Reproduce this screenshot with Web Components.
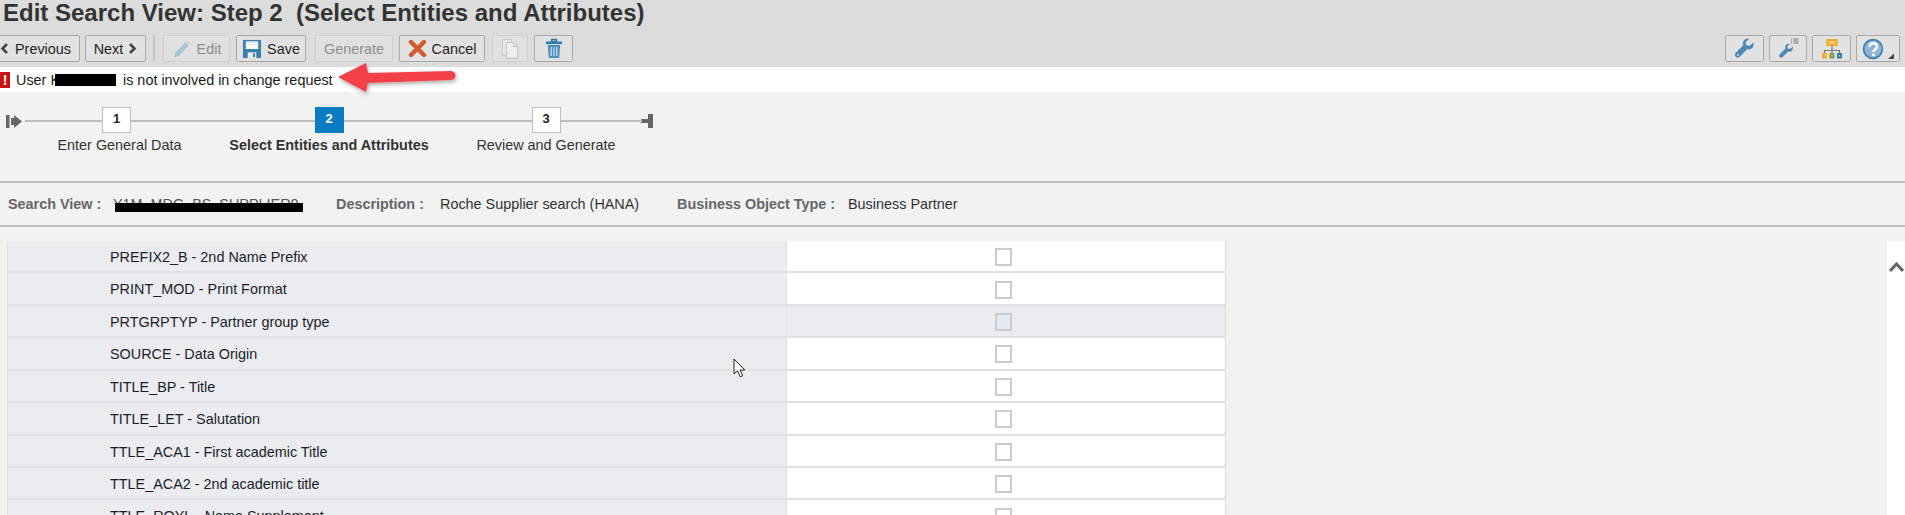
<!DOCTYPE html>
<html><head><meta charset="utf-8"><title>Edit Search View</title>
<style>
html,body{margin:0;height:515px;overflow:hidden;background:#f2f2f2;font-family:"Liberation Sans",Arial,sans-serif;color:#222}
</style></head><body>
<sv-page>
<sv-header>
  <span slot="title">Edit Search View: Step 2  (Select Entities and Attributes)</span>
  <sv-btn w="82" icon="left-first" pr="7" style="--gap:6px">Previous</sv-btn>
  <sv-btn w="61" icon="right" trail ml="-1">Next</sv-btn>
  <sv-sep></sv-sep>
  <sv-btn w="67" icon="edit" off>Edit</sv-btn>
  <sv-btn w="70" icon="save">Save</sv-btn>
  <sv-btn w="78" off ml="3">Generate</sv-btn>
  <sv-btn w="86" icon="cancel">Cancel</sv-btn>
  <sv-btn w="36" icon="copy" off ml="1"></sv-btn>
  <sv-btn w="39" icon="trash"></sv-btn>
  <sv-btn slot="right" w="39" icon="wrench"></sv-btn>
  <sv-btn slot="right" w="38" icon="wrenchlist"></sv-btn>
  <sv-btn slot="right" w="39" icon="org"></sv-btn>
  <sv-btn slot="right" w="44" icon="help"></sv-btn>
</sv-header>
<sv-message>User K<sv-redact w="61"></sv-redact> is not involved in change request</sv-message>
<sv-stepper>
  <sv-step n="1" w="183" style="--tx:6px">Enter General Data</sv-step>
  <sv-step n="2" w="242" active>Select Entities and Attributes</sv-step>
  <sv-step n="3" w="192">Review and Generate</sv-step>
</sv-stepper>
<sv-info></sv-info>
<sv-table>
  <sv-row>PREFIX2_B - 2nd Name Prefix</sv-row>
  <sv-row>PRINT_MOD - Print Format</sv-row>
  <sv-row shaded>PRTGRPTYP - Partner group type</sv-row>
  <sv-row>SOURCE - Data Origin</sv-row>
  <sv-row>TITLE_BP - Title</sv-row>
  <sv-row>TITLE_LET - Salutation</sv-row>
  <sv-row>TTLE_ACA1 - First academic Title</sv-row>
  <sv-row>TTLE_ACA2 - 2nd academic title</sv-row>
  <sv-row>TTLE_ROYL - Name Supplement</sv-row>
</sv-table>
</sv-page>
<script>
const ICONS={
 'left-first':'<svg width="9" height="11" viewBox="0 0 9 11"><path d="M7 1 2.5 5.5 7 10" fill="none" stroke="#444" stroke-width="2.6"/></svg>',
 right:'<svg width="9" height="11" viewBox="0 0 9 11"><path d="M2 1 6.5 5.5 2 10" fill="none" stroke="#444" stroke-width="2.6"/></svg>',
 edit:'<svg width="20" height="20" viewBox="0 0 20 20"><path d="M3 14 13.500 3.200l3.400 3.200L6.300 17.200 2 18.500z" fill="#a9c3d6"/><path d="M14.500 2.400l1-.9 3.300 3.200-1 1z" fill="#bcd0de"/></svg>',
 save:'<svg width="20" height="20" viewBox="0 0 21 21"><path d="M1 1h19v19H1z" fill="#3d7fae"/><path d="M4 2.500h13v8H4z" fill="#fff"/><path d="M4 4h13M4 6h13" stroke="#cfe0ec" stroke-width=".8"/><path d="M6 14h9v6H6z" fill="#e9eef2"/><path d="M11.500 15h2.200v4h-2.200z" fill="#3d7fae"/></svg>',
 cancel:'<svg width="19" height="19" viewBox="0 0 19 19"><path d="M3 3l13 13M16 3 3 16" stroke="#cf5a2c" stroke-width="4.400" stroke-linecap="round"/></svg>',
 copy:'<svg width="20" height="21" viewBox="0 0 20 21"><path d="M2.500 1.500h9v16h-9z" fill="#e6e6e6" stroke="#c9c9c9"/><path d="M6.500 4.500h7l4 4v12h-11z" fill="#eee" stroke="#c4c4c4"/><path d="M13.500 4.500v4h4" fill="none" stroke="#c4c4c4"/></svg>',
 trash:'<svg width="18" height="21" viewBox="0 0 18 21"><path d="M6.500 1.500h5v2h-5z" fill="none" stroke="#3579aa" stroke-width="1.400"/><path d="M1 3.500h16v2.600H1z" fill="#3579aa"/><path d="M2.800 7h12.400l-1 13H3.800z" fill="#4d8dba"/><path d="M6.200 9v9M9 9v9M11.800 9v9" stroke="#d5e5f0" stroke-width="1.200"/></svg>',
 wrench:'<svg width="21" height="21" viewBox="0 0 26 26"><path d="M24 5.500l-5 4.500-3.700-1-1-3.600L19 1c-3.500-1.100-7.500 1-8 5-.1 1.200 0 2 .4 3L2 18.500c-1.600 1.700-.6 4.300.8 5.200 1.500.9 3.200.6 4.400-.6l9-9.300c1.200.4 2.300.5 3.500.2 3.400-.8 5.300-4.600 4.300-8z" fill="#4c88b8"/><circle cx="4.800" cy="21" r="1.200" fill="#cfe0ec"/></svg>',
 wrenchlist:'<svg width="21" height="21" viewBox="0 0 21 21"><path d="M15 8.500l-3 2.600-2.200-.6-.6-2.100 2.800-2.500c-2.100-.6-4.400.6-4.800 2.900-.1.700 0 1.300.3 1.800L1.700 16.300c-1 1-.4 2.500.5 3.100.9.500 1.900.3 2.600-.3l5.300-5.500c.7.200 1.300.2 2.100.1 2-.5 3.300-2.700 2.800-5.700z" fill="#4c88b8"/><path d="M13 1h1.200M13 3h1.200M13 5h1.200M15.500 1H20.500M15.500 3H20.500M15.500 5H20.500" stroke="#777" stroke-width="1"/></svg>',
 org:'<svg width="20" height="20" viewBox="0 0 20 20"><path d="M10 7v4.500M2.500 14v-2.500h15V14M10 11.500V14" fill="none" stroke="#777" stroke-width="1.200"/><path d="M4.500 0h11v7h-11z" fill="#f5a623"/><path d="M6.500 2h7v3h-7z" fill="#f9c766"/><path d="M0 14h5v5.500H0z" fill="#f5a623"/><path d="M7.500 14h5v5.500h-5z" fill="#7a9a3d"/><path d="M15 14h5v5.500h-5z" fill="#2f79ab"/><circle cx="2.500" cy="16.700" r=".9" fill="#fbd78d"/><circle cx="10" cy="16.700" r=".9" fill="#b5cc80"/><circle cx="17.500" cy="16.700" r=".9" fill="#9cc4dd"/></svg>',
 help:'<svg width="34" height="22" viewBox="0 0 34 22"><circle cx="12" cy="11" r="9.400" fill="#8fb4d4" stroke="#3f80b0" stroke-width="1.800"/><path d="M8.500 8.800c0-4.600 7.500-4.600 7.500 0 0 2.700-3.600 2.700-3.600 5.300" fill="none" stroke="#fff" stroke-width="2.500"/><circle cx="12.400" cy="16.700" r="1.500" fill="#fff"/><path d="M33 15.500V21h-6z" fill="#444"/></svg>'
};
function mk(tag,css,html,setup){
  customElements.define(tag,class extends HTMLElement{
    connectedCallback(){
      if(this.shadowRoot)return;
      const r=this.attachShadow({mode:'open'});
      r.innerHTML='<style>'+css+'</style>'+(typeof html==='function'?html(this):html);
      if(setup)setup(this,r);
    }
  });
}
mk('sv-page',':host{display:block;height:515px;overflow:hidden;position:relative}','<slot></slot>');
mk('sv-header',`:host{display:block;height:67px;background:#dcdcdc;box-sizing:border-box}
 h1{margin:0;height:35px;padding-left:3px;font:bold 24px/25px "Liberation Sans",Arial,sans-serif;color:#333;white-space:pre}
 .bar{display:flex;justify-content:space-between;align-items:flex-start;margin-left:-2px;padding-right:5px}
 .l,.r{display:flex;align-items:flex-start}
 .l{gap:6px}.r{gap:5px}`,
 `<h1><slot name="title"></slot></h1><div class="bar"><div class="l"><slot></slot></div><div class="r"><slot name="right"></slot></div></div>`);
mk('sv-sep',':host{display:block;width:2px;height:26px;background:#c2c2c2;margin:0 2px 0 1px}','');
mk('sv-btn',`:host{display:block;box-sizing:border-box;height:27px;border:1px solid #a8a8a8;border-radius:2px;background:#e2e2e2;color:#222;font-size:14.400px}
 :host([off]){border-color:#cfcfcf;color:#8d8d8d;background:#e0e0e0}
 .i{display:flex;box-sizing:border-box;height:100%;align-items:center;justify-content:center;gap:var(--gap,5px);white-space:nowrap}
 svg{display:block;flex:none}`,
 el=>`<div class="i" style="padding-right:${el.getAttribute('pr')||0}px">${el.hasAttribute('trail')?'':(ICONS[el.getAttribute('icon')]||'')}<slot></slot>${el.hasAttribute('trail')?ICONS[el.getAttribute('icon')]:''}</div>`,
 el=>{el.style.width=el.getAttribute('w')+'px';if(el.hasAttribute('ml'))el.style.marginLeft=el.getAttribute('ml')+'px'});
mk('sv-message',`:host{display:flex;align-items:center;height:25px;background:#fff;font-size:14.400px;color:#1a1a1a;white-space:pre;position:relative}
 .e{width:10px;height:16px;background:#cc1111;color:#fff;font:bold 14px/16px "Liberation Sans",Arial,sans-serif;text-align:center;margin-right:6px;flex:none}
 svg{position:absolute;left:335px;top:-8px}`,
 `<div class="e">!</div><span><slot></slot></span>
 <svg width="170" height="42" viewBox="0 0 170 42"><defs><filter id="s" x="-10%" y="-30%" width="120%" height="170%"><feDropShadow dx="1" dy="2" stdDeviation="2" flood-color="#000" flood-opacity=".35"/></filter></defs><path d="M3 18 31 4 33 14 116 12c6 0 6 9 0 9L33 24 31 33z" fill="#f44147" filter="url(#s)"/></svg>`);
mk('sv-redact',':host{display:inline-block;height:12px;background:#000;vertical-align:-1px;margin:0 3px 0 -5px}','',el=>{el.style.width=el.getAttribute('w')+'px'});
mk('sv-stepper',`:host{display:block;box-sizing:border-box;border-bottom:2px solid #bdbdbd;height:91px}
 .w{display:flex;align-items:flex-start;padding:15px 0 0 6px}
 svg{display:block;margin-top:8px;flex:none}`,
 `<div class="w"><svg width="16" height="13" viewBox="0 0 16 13" style="margin-right:3px"><path d="M0 0h3.500v13H0zM5 3h3V0l8 6.500-8 6.500v-3H5z" fill="#666"/></svg><slot></slot><svg width="13" height="14" viewBox="0 0 13 14" style="margin:7px 0 0 -1px"><path d="M0 5h7V0h5v14H7V9H0z" fill="#666"/></svg></div>`);
mk('sv-step',`:host{display:block;height:60px;position:relative;text-align:center;font-size:14.400px;color:#333;white-space:nowrap}
 .line{height:2px;background:#bdbdbd;margin-top:13px;margin-bottom:-15px}
 .b{box-sizing:border-box;width:29px;height:26px;margin:0 auto;border:1px solid #bdbdbd;background:#fff;font:bold 13px/22px "Liberation Sans",Arial,sans-serif;color:#222;position:relative}
 .t{margin-top:3px;line-height:18px;padding-left:var(--tx,0)}
 :host([active]) .b{background:#0a7cc2;border-color:#0a7cc2;color:#fff}
 :host([active]) .t{font-weight:bold}`,
 el=>`<div class="line"></div><div class="b">${el.getAttribute('n')}</div><div class="t"><slot></slot></div>`,
 el=>{el.style.width=el.getAttribute('w')+'px'});
mk('sv-info',`:host{display:flex;align-items:center;box-sizing:border-box;height:44px;border-bottom:2px solid #bdbdbd;font-size:14.400px;color:#333;padding-left:8px;white-space:nowrap}
 b{color:#666;flex:none}
 span{flex:none}
 .v{position:relative;color:#555}
 .v i{position:absolute;left:2px;top:7px;width:188px;height:9px;background:#000}`,
 `<b style="width:105px">Search View :</b><span class="v" style="width:223px">Y1M_MDG_BS_SUPPLIER0<i></i></span>
  <b style="width:104px">Description :</b><span style="width:237px">Roche Supplier search (HANA)</span>
  <b style="width:171px">Business Object Type :</b><span>Business Partner</span>`);
mk('sv-table',`:host{display:block;margin:14px 0 0 7px;border-left:1px solid #e2e2e2;position:relative;height:300px}
 .scroll{position:absolute;left:1879px;top:0;width:18px;height:300px;background:#fff}
 .scroll svg{position:absolute;left:2px;top:21px}
 .cur{position:absolute;left:725px;top:117px}`,
 `<slot></slot><div class="scroll"><svg width="15" height="10" viewBox="0 0 15 10"><path d="M1 9 7.500 2 14 9" fill="none" stroke="#666" stroke-width="3"/></svg></div>
 <svg class="cur" width="13" height="20" viewBox="0 0 13 20"><path d="M1 1v15l3.500-3.200 2.700 6 2.500-1-2.600-5.800h4.700z" fill="#fff" stroke="#222" stroke-width="1"/></svg>`);
mk('sv-row',`:host{display:grid;grid-template-columns:779px 439px;grid-template-rows:32.430px;height:32.430px;box-sizing:border-box;font-size:14.400px;color:#1c1c2a}
 .a,.c{box-sizing:border-box;min-height:0;border-bottom:2px solid #dfe0e3}
 .a{background:#eaecef;padding-left:102px;line-height:32px;border-right:1px solid #e0e2e5;white-space:nowrap}
 .c{background:#fff;display:flex;align-items:center;justify-content:center;border-right:1px solid #dadbdd;padding:2px 5px 0 0}
 .k{box-sizing:border-box;width:17px;height:18px;border:2px solid #cbcbcb;background:#fff}
 :host([shaded]) .c{background:#eaecef}
 :host([shaded]) .k{background:#e2ebf3}`,
 `<div class="a"><slot></slot></div><div class="c"><div class="k"></div></div>`);
</script>
</body></html>
